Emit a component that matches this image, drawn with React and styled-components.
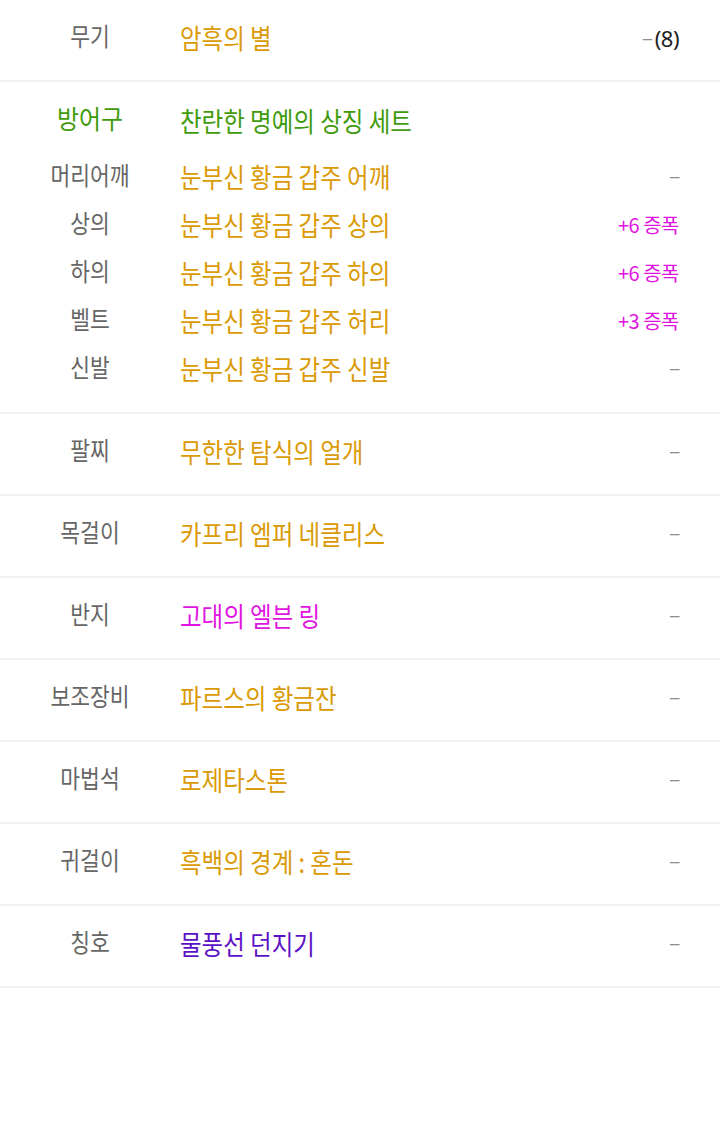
import React from 'react';
import styled, {createGlobalStyle} from 'styled-components';

const GlobalStyle = createGlobalStyle`
    body {
        margin: 0;
        background: #ffffff;
        font-family: "Noto Sans CJK KR", "Noto Sans", sans-serif;
    }
`;

const colors = {
    gold: '#da9a06',
    green: '#3f9b0b',
    magenta: '#e014e0',
    purple: '#5b10c6',
};

const List = styled.div`
    width: 720px;
`;

const Section = styled.section`
    padding: ${props => props.top || 14}px 0 ${props => props.bottom || 18}px;
    border-bottom: 2px solid #f1f1f1;
`;

const Row = styled.div`
    display: flex;
    align-items: flex-start;
    height: 48px;
    line-height: 48px;
    padding-right: 41px;
    margin-bottom: ${props => props.gap || 0}px;
`;

// the source font is narrow, so glyphs are squeezed horizontally
const Label = styled.div`
    flex: 0 0 180px;
    text-align: center;
    line-height: 42px;
    font-size: ${props => props.size || 25}px;
    color: ${props => props.color || '#666666'};
    transform: scaleX(${props => props.squeeze || 0.86});
    transform-origin: center;
    white-space: nowrap;
`;

const Name = styled.div`
    flex: 1;
    font-size: 27px;
    color: ${props => props.color};
    transform: scaleX(0.87);
    transform-origin: left center;
    white-space: nowrap;
`;

const Value = styled.div`
    font-size: 20px;
    color: ${colors.magenta};
    letter-spacing: -0.5px;
    white-space: nowrap;
`;

const Dash = styled.span`
    font-family: "Liberation Sans", sans-serif;
    font-size: 17px;
    color: #8c8c8c;
    vertical-align: ${props => props.lift || 4}px;
`;

const Count = styled.span`
    font-family: "Noto Sans", sans-serif;
    font-size: 22px;
    color: #1e1e1e;
    margin-left: 3px;
`;

const armor = [
    {label: '머리어깨', name: '눈부신 황금 갑주 어깨', amp: null},
    {label: '상의', name: '눈부신 황금 갑주 상의', amp: '+6 증폭'},
    {label: '하의', name: '눈부신 황금 갑주 하의', amp: '+6 증폭'},
    {label: '벨트', name: '눈부신 황금 갑주 허리', amp: '+3 증폭'},
    {label: '신발', name: '눈부신 황금 갑주 신발', amp: null},
];

const others = [
    {label: '팔찌', name: '무한한 탐식의 얼개', color: colors.gold},
    {label: '목걸이', name: '카프리 엠퍼 네클리스', color: colors.gold},
    {label: '반지', name: '고대의 엘븐 링', color: colors.magenta},
    {label: '보조장비', name: '파르스의 황금잔', color: colors.gold},
    {label: '마법석', name: '로제타스톤', color: colors.gold},
    {label: '귀걸이', name: '흑백의 경계 : 혼돈', color: colors.gold},
    {label: '칭호', name: '물풍선 던지기', color: colors.purple},
];

export default function App() {
    return (
        <List>
            <GlobalStyle />
            <Section>
                <Row>
                    <Label>무기</Label>
                    <Name color={colors.gold}>암흑의 별</Name>
                    <Value><Dash lift={3}>–</Dash><Count>(8)</Count></Value>
                </Row>
            </Section>

            <Section top={15} bottom={19}>
                <Row gap={8}>
                    <Label size={26} squeeze={0.92} color={colors.green}>방어구</Label>
                    <Name color={colors.green}>찬란한 명예의 상징 세트</Name>
                </Row>
                {armor.map(item => (
                    <Row key={item.label}>
                        <Label>{item.label}</Label>
                        <Name color={colors.gold}>{item.name}</Name>
                        <Value>{item.amp ? item.amp : <Dash>–</Dash>}</Value>
                    </Row>
                ))}
            </Section>

            {others.map(item => (
                <Section key={item.label}>
                    <Row>
                        <Label>{item.label}</Label>
                        <Name color={item.color}>{item.name}</Name>
                        <Value><Dash>–</Dash></Value>
                    </Row>
                </Section>
            ))}
        </List>
    );
}
